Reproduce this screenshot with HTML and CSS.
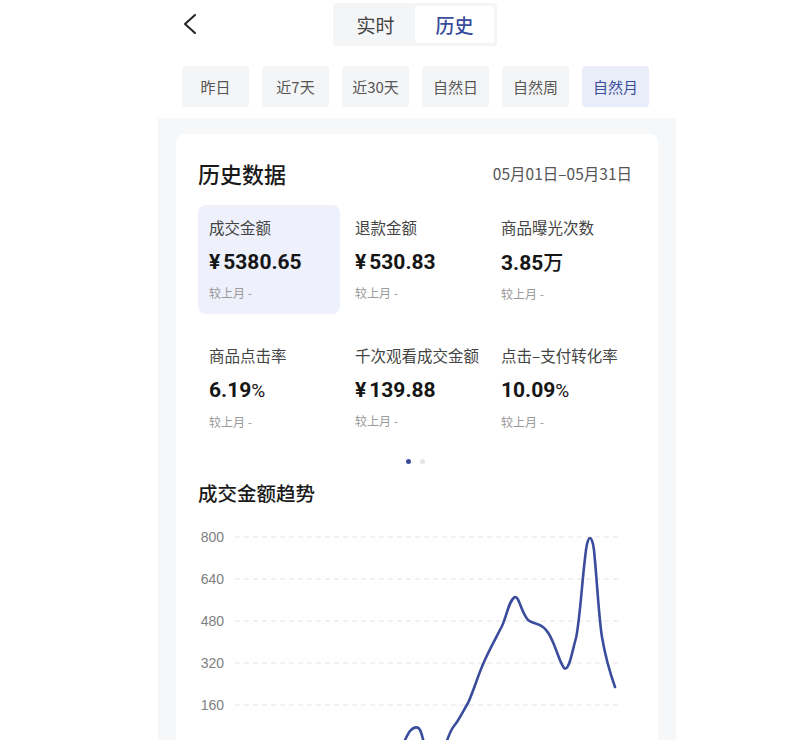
FILE: index.html
```html
<!DOCTYPE html>
<html lang="zh-CN">

<head>
  <meta charset="UTF-8" />
  <title>历史数据</title>
  <link rel="stylesheet" href="styles.css">
</head>

<body>

  <div class="topbar">
    <svg class="back" width="20" height="24" viewBox="0 0 20 24">
      <polyline points="13,3 3,12 13,21" fill="none" stroke="#222" stroke-width="2" stroke-linecap="round" stroke-linejoin="round" />
    </svg>
    <div class="segment">
      <div class="seg-tab">实时</div>
      <div class="seg-tab active">历史</div>
    </div>
  </div>

  <div class="filters">
    <div class="pill">昨日</div>
    <div class="pill">近7天</div>
    <div class="pill">近30天</div>
    <div class="pill">自然日</div>
    <div class="pill">自然周</div>
    <div class="pill active">自然月</div>
  </div>

  <div class="panel">
    <div class="card">
      <div class="card-head">
        <div class="card-title">历史数据</div>
        <div class="date-range">05月01日–05月31日</div>
      </div>

      <div class="metrics">
        <div class="metric active">
          <div class="m-label">成交金额</div>
          <div class="m-value">¥<span class="yuan-gap"></span>5380.65</div>
          <div class="m-compare">较上月 -</div>
        </div>
        <div class="metric">
          <div class="m-label">退款金额</div>
          <div class="m-value">¥<span class="yuan-gap"></span>530.83</div>
          <div class="m-compare">较上月 -</div>
        </div>
        <div class="metric">
          <div class="m-label">商品曝光次数</div>
          <div class="m-value">3.85<span class="unit">万</span></div>
          <div class="m-compare">较上月 -</div>
        </div>
        <div class="metric">
          <div class="m-label">商品点击率</div>
          <div class="m-value">6.19<span class="pct">%</span></div>
          <div class="m-compare">较上月 -</div>
        </div>
        <div class="metric">
          <div class="m-label">千次观看成交金额</div>
          <div class="m-value">¥<span class="yuan-gap"></span>139.88</div>
          <div class="m-compare">较上月 -</div>
        </div>
        <div class="metric">
          <div class="m-label">点击–支付转化率</div>
          <div class="m-value">10.09<span class="pct">%</span></div>
          <div class="m-compare">较上月 -</div>
        </div>
      </div>

      <div class="dots">
        <span class="dot on"></span>
        <span class="dot"></span>
      </div>

      <div class="section-title">成交金额趋势</div>

      <svg class="chart" width="440" height="220" viewBox="0 0 440 220">
        <g class="grid">
          <line x1="37" y1="17" x2="422" y2="17" />
          <line x1="37" y1="59" x2="422" y2="59" />
          <line x1="37" y1="101" x2="422" y2="101" />
          <line x1="37" y1="143" x2="422" y2="143" />
          <line x1="37" y1="185" x2="422" y2="185" />
        </g>
        <g class="axis">
          <text x="26" y="22">800</text>
          <text x="26" y="64">640</text>
          <text x="26" y="106">480</text>
          <text x="26" y="148">320</text>
          <text x="26" y="190">160</text>
        </g>
        <path class="trend" d="M196,236 C204,232 208,214 213,210 C216,207 220,206 222,210 C225,215 226,228 230,236
          M244,236 C247,226 251,212 256,206 C261,200 264,193 270,183 C276,170 280,155 286,142
          C292,128 298,118 304,106 C309,95 311,80 317,77 C321,76 323,92 330,100
          C336,105 342,102 348,110 C356,118 360,140 366,148 C371,152 374,132 378,118
          C382,100 384,60 388,30 C390,14 394,14 396,30 C399,60 401,100 404,117
          C407,135 411,150 417,167" />
      </svg>
    </div>
  </div>

</body>

</html>
```

FILE: styles.css
```css
body {
  margin: 0;
  background: #fff;
  font-family: "Noto Sans CJK SC", "Noto Sans", sans-serif;
  color: #222;
}

.topbar {
  display: flex;
  align-items: flex-start;
  height: 50px;
  padding-left: 182px;
}

.back {
  margin-top: 12px;
}

.segment {
  display: flex;
  margin-left: 131px;
  margin-top: 3px;
  padding: 3px;
  background: #f4f5f7;
  border-radius: 4px;
}

.seg-tab {
  width: 79px;
  height: 37px;
  line-height: 37px;
  text-align: center;
  font-size: 19px;
  color: #444;
  border-radius: 3px;
}

.seg-tab.active {
  background: #fff;
  color: #3a4d9c;
  font-weight: 500;
}

.filters {
  display: flex;
  gap: 13px;
  padding-left: 182px;
  margin-top: 16px;
}

.pill {
  width: 67px;
  height: 41px;
  line-height: 41px;
  text-align: center;
  font-size: 15px;
  color: #555;
  background: #f4f5f7;
  border-radius: 4px;
}

.pill.active {
  background: #e9edf9;
  color: #3a4d9c;
}

.panel {
  width: 482px;
  margin-left: 158px;
  margin-top: 11px;
  padding: 16px 18px 0 18px;
  background: #f6f7f9;
}

.card {
  background: #fff;
  border-radius: 8px 8px 0 0;
  padding: 24px 26px 0 22px;
  height: 582px;
  overflow: hidden;
}

.card-head {
  display: flex;
  justify-content: space-between;
  align-items: center;
  height: 30px;
}

.card-title {
  font-size: 22px;
  font-weight: 500;
  color: #1a1a1a;
}

.date-range {
  font-size: 15.5px;
  color: #555;
}

.metrics {
  display: grid;
  grid-template-columns: 142px 142px 1fr;
  column-gap: 4px;
  row-gap: 19px;
  margin-top: 17px;
}

.metric {
  height: 109px;
  box-sizing: border-box;
  padding: 11px 0 0 11px;
  border-radius: 8px;
}

.metric.active {
  background: #eef0fb;
}

.m-label {
  font-size: 15.5px;
  line-height: 22px;
  color: #444;
  white-space: nowrap;
}

.m-value {
  margin-top: 10px;
  font-family: "Roboto", "Noto Sans CJK SC", sans-serif;
  font-size: 21px;
  line-height: 28px;
  font-weight: 700;
  color: #151515;
}

.yuan-gap {
  display: inline-block;
  width: 3px;
}

.unit {
  font-family: "Noto Sans CJK SC", sans-serif;
  font-size: 20px;
  font-weight: 500;
}

.pct {
  font-weight: 400;
  font-size: 19px;
}

.m-compare {
  margin-top: 9px;
  font-size: 12px;
  line-height: 16px;
  color: #9a9a9a;
}

.dots {
  display: flex;
  justify-content: center;
  gap: 9px;
  margin-top: 17px;
  height: 5px;
}

.dot {
  width: 5px;
  height: 5px;
  border-radius: 50%;
  background: #e3e5ea;
}

.dot.on {
  background: #3a4d9c;
}

.section-title {
  margin-top: 16px;
  font-size: 19.5px;
  line-height: 26px;
  font-weight: 500;
  color: #1a1a1a;
}

.chart {
  display: block;
  margin-top: 14px;
}

.grid line {
  stroke: #e4e4e4;
  stroke-width: 1;
  stroke-dasharray: 5 4;
}

.axis text {
  font-family: "Liberation Sans", Arial, sans-serif;
  font-size: 14px;
  fill: #808080;
  text-anchor: end;
}

.trend {
  fill: none;
  stroke: #3a4d9c;
  stroke-width: 2.6;
  stroke-linecap: round;
  stroke-linejoin: round;
}
```
